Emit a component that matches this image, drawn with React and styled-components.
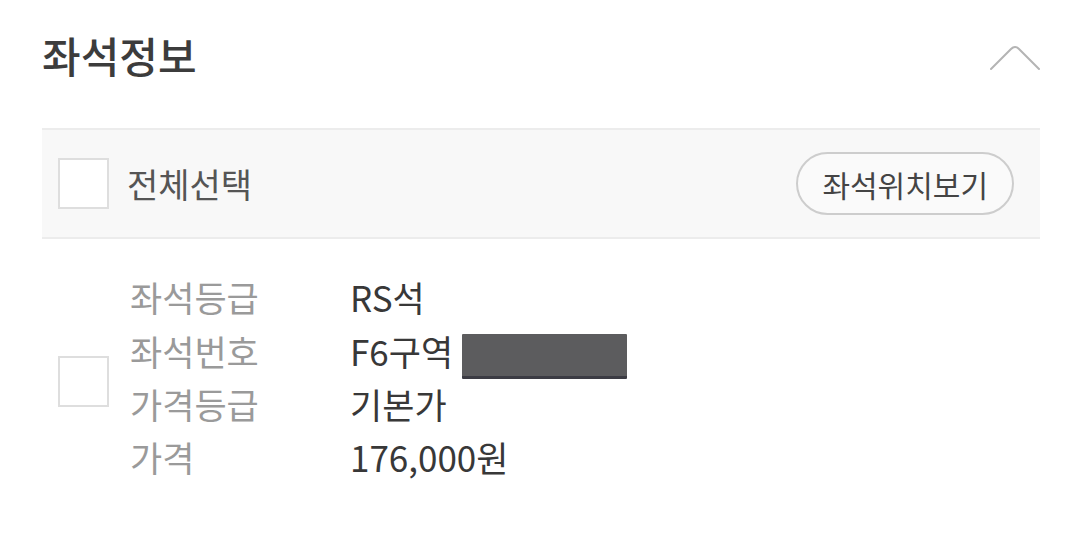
import React from "react";
import styled, { createGlobalStyle } from "styled-components";

const GlobalStyle = createGlobalStyle`
  html, body {
    margin: 0;
    padding: 0;
    background: #fff;
    font-family: "Noto Sans CJK KR", "Noto Sans", sans-serif;
  }
`;

const rows = [
  { label: "좌석등급", value: "RS석" },
  { label: "좌석번호", value: "F6구역", masked: true },
  { label: "가격등급", value: "기본가" },
  { label: "가격", value: "176,000원" },
];

const App = () => {
  return (
    <Page>
      <GlobalStyle />
      <Header>
        <Title>좌석정보</Title>
        <Chevron width="52" height="28" viewBox="0 0 52 28">
          <path d="M2 26 L22 6 Q26 2 30 6 L50 26" />
        </Chevron>
      </Header>
      <SelectBar>
        <CheckLabel>
          <CheckBox />
          <SelectText>전체선택</SelectText>
        </CheckLabel>
        <PillButton>좌석위치보기</PillButton>
      </SelectBar>
      <SeatItem>
        <CheckBox $offset={9} />
        <InfoTable>
          {rows.map(({ label, value, masked }) => (
            <InfoRow key={label}>
              <Label>{label}</Label>
              <Value>
                {value}
                {masked && <Mask />}
              </Value>
            </InfoRow>
          ))}
        </InfoTable>
      </SeatItem>
    </Page>
  );
};

export default App;

const Page = styled.div`
  padding: 0 40px 0 42px;
  height: 542px;
  box-sizing: border-box;
  overflow: hidden;
`;

const Header = styled.div`
  height: 128px;
  box-sizing: border-box;
  padding-top: 26px;
  display: flex;
  justify-content: space-between;
  align-items: flex-start;
`;

const Title = styled.h2`
  margin: 0;
  font-size: 42px;
  line-height: 58px;
  font-weight: 500;
  color: #3c3c3c;
`;

const Chevron = styled.svg`
  margin-top: 17px;
  margin-right: -1px;
  fill: none;
  stroke: #b4b4b4;
  stroke-width: 2;
  stroke-linecap: round;
`;

const SelectBar = styled.div`
  height: 111px;
  box-sizing: border-box;
  border-top: 2px solid #ececec;
  border-bottom: 2px solid #ececec;
  background: #f8f8f8;
  display: flex;
  align-items: center;
  justify-content: space-between;
  padding: 0 26px 0 16px;
`;

const CheckLabel = styled.label`
  display: flex;
  align-items: center;
  gap: 18px;
`;

const CheckBox = styled.span`
  display: block;
  width: 51px;
  height: 51px;
  box-sizing: border-box;
  border: 2px solid #dedede;
  background: #fff;
  flex-shrink: 0;
  margin-top: ${({ $offset }) => $offset || 0}px;
`;

const SelectText = styled.span`
  font-size: 34px;
  color: #555;
  line-height: 1;
`;

const PillButton = styled.button`
  height: 63px;
  padding: 0 24px;
  border: 2px solid #cdcdcd;
  border-radius: 32px;
  background: #fafafa;
  font-family: inherit;
  font-size: 30px;
  color: #444;
`;

const SeatItem = styled.div`
  display: flex;
  align-items: center;
  gap: 21px;
  padding: 31px 0 0 16px;
`;

const InfoTable = styled.div`
  display: flex;
  flex-direction: column;
`;

const InfoRow = styled.div`
  display: flex;
  align-items: center;
  height: 53.4px;
  font-size: 35px;
`;

const Label = styled.span`
  width: 220px;
  color: #9a9a9a;
`;

const Value = styled.span`
  display: flex;
  align-items: center;
  gap: 9px;
  color: #383838;
`;

const Mask = styled.span`
  display: block;
  width: 165px;
  height: 42px;
  margin-top: 13px;
  background: #5c5c5e;
  border-bottom: 3px solid #3c3c44;
  border-radius: 1px;
`;
